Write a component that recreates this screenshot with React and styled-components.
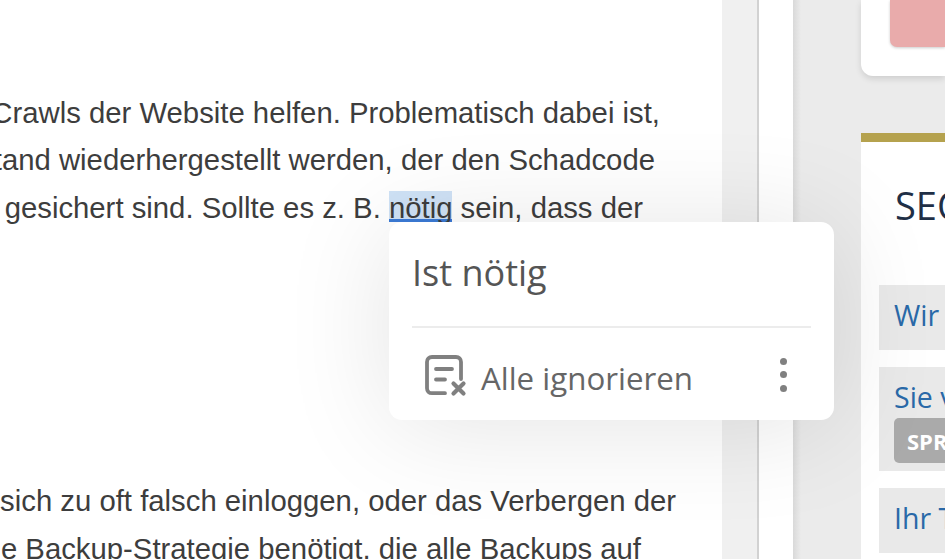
import React from "react";
import styled, { createGlobalStyle } from "styled-components";

const GlobalStyle = createGlobalStyle`
  html, body { margin: 0; padding: 0; background: #fff; }
  body { width: 945px; height: 559px; overflow: hidden; font-family: "Open Sans", sans-serif; }
`;

const paragraphOne = [
  { text: "Crawls der Website helfen. Problematisch dabei ist,", end: 660 },
  { text: "Zustand wiederhergestellt werden, der den Schadcode", end: 655 },
  { text: "gesichert sind. Sollte es z. B. ", mark: "nötig", after: " sein, dass der", end: 643 },
];

const paragraphTwo = [
  { text: "sich zu oft falsch einloggen, oder das Verbergen der", end: 676 },
  { text: "eine Backup-Strategie benötigt, die alle Backups auf", end: 641 },
];

const renderLine = (l, k) => (
  <Line key={k} $end={l.end}>
    <span>
      {l.text}
      {l.mark && <Marked>{l.mark}</Marked>}
      {l.after}
    </span>
  </Line>
);

export default function App() {
  return (
    <>
      <GlobalStyle />
      <Page>
        <Article>
          <Paragraph>{paragraphOne.map(renderLine)}</Paragraph>
          <Paragraph>{paragraphTwo.map(renderLine)}</Paragraph>
        </Article>
        <Gutter />
        <Rail />
        <Sidebar>
          <TopCard>
            <Banner />
          </TopCard>
          <Widget>
            <WidgetTitle>SEO</WidgetTitle>
            <NewsList>
              <NewsItem>
                <NewsLink>Wir</NewsLink>
              </NewsItem>
              <NewsItem>
                <NewsLink>Sie v</NewsLink>
                <Tag>SPR</Tag>
              </NewsItem>
              <NewsItem>
                <NewsLink>Ihr T</NewsLink>
              </NewsItem>
            </NewsList>
          </Widget>
        </Sidebar>
        <Popover>
          <PopoverTitle>Ist nötig</PopoverTitle>
          <Divider />
          <PopoverActions>
            <IgnoreAll>
              <svg width="42" height="42" viewBox="0 0 42 42" fill="none" stroke="#808080" strokeWidth="3.8" strokeLinecap="round" strokeLinejoin="round">
                <path d="M20 38.2H7C4 38.2 2 36.2 2 33.2V7C2 4 4 2 7 2H31C34 2 36 4 36 7V24" />
                <path d="M11 14H27M11 24.5H20" />
                <path d="M28.5 28.5L38.5 38.5M38.5 28.5L28.5 38.5" strokeWidth="4.2" />
              </svg>
              <span>Alle ignorieren</span>
            </IgnoreAll>
            <MoreDots>
              <i />
              <i />
              <i />
            </MoreDots>
          </PopoverActions>
        </Popover>
      </Page>
    </>
  );
}

const Page = styled.div`
  position: relative;
  display: flex;
  width: 945px;
  height: 559px;
  overflow: hidden;
  background: #fff;
`;

const Article = styled.main`
  flex: 0 0 722px;
  overflow: hidden;
  padding-top: 89px;
  box-sizing: border-box;
`;

const Paragraph = styled.div`
  margin-bottom: 246px;
`;

const Line = styled.div`
  display: flex;
  justify-content: flex-end;
  width: ${(props) => props.$end}px;
  height: 47.4px;
  line-height: 47.4px;
  font-family: "Liberation Sans", Arial, sans-serif;
  font-size: 29.3px;
  color: #3d3d3d;
  white-space: nowrap;
`;

const Marked = styled.span`
  display: inline-block;
  height: 31px;
  line-height: 33px;
  vertical-align: baseline;
  background: #cfe2f6;
  border-bottom: 3px solid #3c7bd6;
  box-sizing: border-box;
`;

const Gutter = styled.div`
  flex: 0 0 35px;
  background: #f0f0f0;
  border-right: 2px solid #d2d2d2;
`;

const Rail = styled.div`
  flex: 0 0 34px;
  background: #fff;
`;

const Sidebar = styled.aside`
  flex: 1;
  min-width: 0;
  overflow: hidden;
  padding-left: 68px;
  background: linear-gradient(90deg, #d9d9d9 0, #ebebeb 8px);
`;

const TopCard = styled.div`
  height: 76px;
  padding-left: 29px;
  background: #fff;
  border-bottom-left-radius: 12px;
  box-shadow: 0 3px 6px rgba(0, 0, 0, 0.12);
`;

const Banner = styled.div`
  height: 47px;
  background: #e9abab;
  border-bottom-left-radius: 7px;
  box-shadow: 0 1px 3px rgba(0, 0, 0, 0.2);
`;

const Widget = styled.section`
  height: 426px;
  margin-top: 57px;
  padding: 39px 0 0 18px;
  box-sizing: border-box;
  background: #fff;
  border-top: 9px solid #b5a24e;
`;

const WidgetTitle = styled.h2`
  margin: 0 0 56px 16px;
  font-size: 38px;
  line-height: 48px;
  font-weight: 400;
  color: #1f2f46;
  white-space: nowrap;
`;

const NewsList = styled.div`
  display: flex;
  flex-direction: column;
  gap: 17px;
`;

const NewsItem = styled.div`
  padding: 9px 0 14px 15px;
  background: #e9e9e9;
  white-space: nowrap;
`;

const NewsLink = styled.div`
  font-size: 28.5px;
  line-height: 42px;
  color: #2a69a8;
`;

const Tag = styled.div`
  width: fit-content;
  margin: 0 0 -6px;
  padding: 0 13px;
  height: 45px;
  line-height: 47px;
  border-radius: 5px;
  background: #aaaaaa;
  color: #fff;
  font-size: 22px;
  font-weight: 700;
`;

const Popover = styled.div`
  position: absolute;
  left: 389px;
  top: 222px;
  width: 445px;
  height: 198px;
  padding: 0 23px;
  box-sizing: border-box;
  background: #fff;
  border-radius: 13px;
  box-shadow: 0 6px 110px rgba(0, 0, 0, 0.11);
`;

const PopoverTitle = styled.div`
  height: 104px;
  line-height: 101px;
  font-size: 36px;
  color: #555;
`;

const Divider = styled.div`
  height: 2px;
  background: #ececec;
`;

const PopoverActions = styled.div`
  display: flex;
  align-items: center;
  justify-content: space-between;
  height: 92px;
`;

const IgnoreAll = styled.div`
  display: flex;
  align-items: center;
  gap: 14px;
  margin-top: 8px;
  padding-left: 13px;
  font-size: 31.3px;
  color: #666;

  svg {
    margin-top: -4px;
  }
`;

const MoreDots = styled.div`
  display: flex;
  flex-direction: column;
  gap: 6.5px;
  margin: 1px 24px 0 0;

  i {
    display: block;
    width: 7px;
    height: 7px;
    border-radius: 50%;
    background: #808080;
  }
`;
